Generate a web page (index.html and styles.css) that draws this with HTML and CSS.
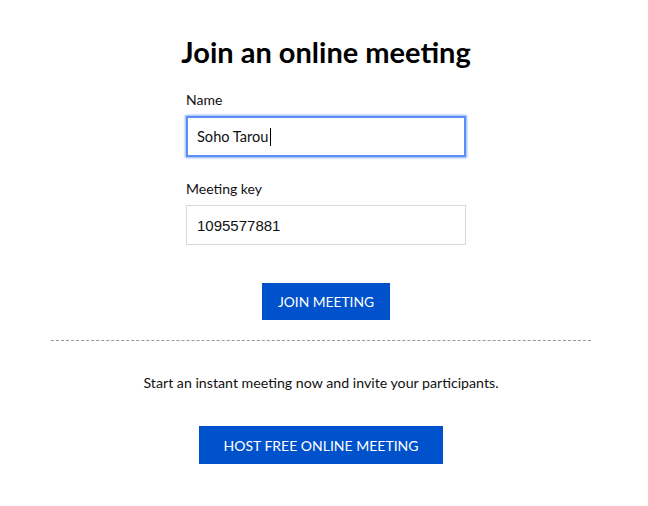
FILE: index.html
```html
<!DOCTYPE html>
<html>
<head>
<meta charset="utf-8">
<link rel="stylesheet" href="styles.css">
</head>
<body>
<div class="page">
  <form class="join">
    <h1 class="title">Join an online meeting</h1>
    <label class="field">
      <span class="label">Name</span>
      <span class="input focused">Soho Tarou<span class="caret"></span></span>
    </label>
    <label class="field">
      <span class="label">Meeting key</span>
      <span class="input key">1095577881</span>
    </label>
    <div class="actions">
      <button type="button" class="btn join-btn">JOIN MEETING</button>
    </div>
  </form>
  <hr class="divider">
  <section class="host">
    <p class="host-text">Start an instant meeting now and invite your participants.</p>
    <button type="button" class="btn host-btn">HOST FREE ONLINE MEETING</button>
  </section>
</div>
</body>
</html>
```

FILE: styles.css
```css
html, body {
  margin: 0;
  padding: 0;
  background: #fff;
}
body {
  font-family: "Lato", "Noto Sans", sans-serif;
  color: #111;
}
.page {
  width: 540px;
  margin-left: 51px;
  padding-top: 34px;
}
.join {
  width: 280px;
  margin-left: 135px;
  display: flex;
  flex-direction: column;
}
.title {
  font-size: 29px;
  line-height: 36px;
  font-weight: 700;
  text-align: center;
  white-space: nowrap;
  margin: 0 -20px;
  color: #000;
}
.field {
  display: flex;
  flex-direction: column;
}
.field:first-of-type { margin-top: 22px; }
.field + .field { margin-top: 24px; }
.label {
  font-size: 14px;
  line-height: 16px;
  margin-bottom: 8px;
}
.input {
  box-sizing: border-box;
  height: 41px;
  border: 1px solid #d9d9d9;
  display: flex;
  align-items: center;
  padding: 0 10px;
  font-size: 14.6px;
  background: #fff;
}
.input.focused {
  border: 2px solid #5b8ff5;
  box-shadow: 0 0 2px 1px #8fb3fa;
  padding: 0 9px;
}
.caret {
  display: inline-block;
  width: 1px;
  height: 18px;
  background: #000;
  margin-left: 1px;
}
.input.key {
  height: 40px;
  font-family: "Liberation Sans", Arial, sans-serif;
  font-size: 15px;
}
.actions {
  display: flex;
  justify-content: center;
  margin-top: 38px;
}
.btn {
  border: 0;
  background: #0052cc;
  color: #fff;
  font-family: "Lato", "Noto Sans", sans-serif;
  font-size: 13.8px;
  cursor: pointer;
}
.join-btn {
  width: 128px;
  height: 37px;
}
.divider {
  margin: 20px 0 0;
  border: 0;
  border-top: 1px dashed #999;
  height: 0;
}
.host {
  display: flex;
  flex-direction: column;
  align-items: center;
}
.host-text {
  margin: 34px 0 0;
  font-size: 14.2px;
  line-height: 16px;
}
.host-btn {
  margin-top: 35px;
  width: 244px;
  height: 38px;
  font-size: 14px;
}
```
